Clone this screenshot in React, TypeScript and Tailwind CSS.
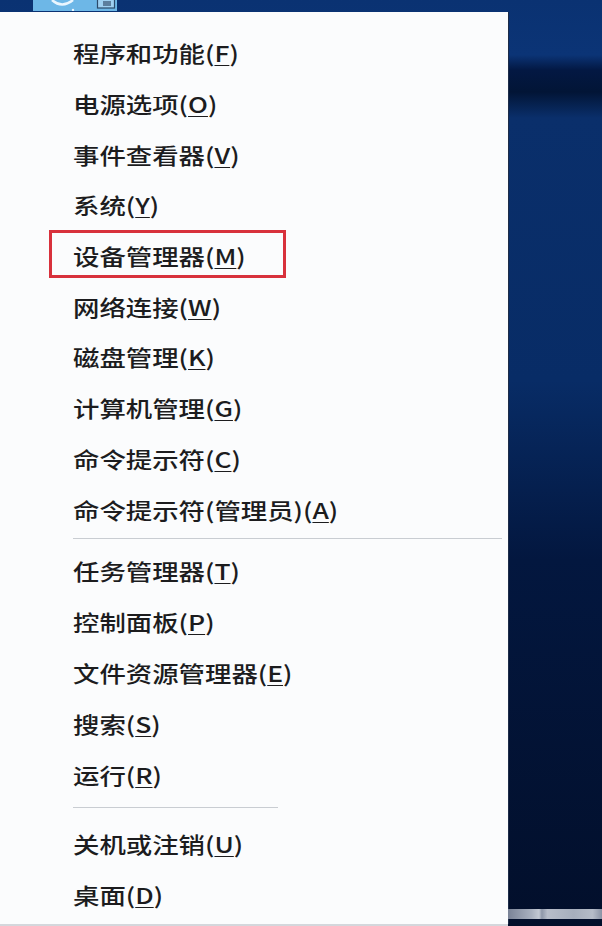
import React from "react";

type Item = { label: string; key: string; boxed?: boolean };

const groups: { items: Item[]; row: string }[] = [
  {
    row: "h-[50.7px]",
    items: [
      { label: "程序和功能", key: "F" },
      { label: "电源选项", key: "O" },
      { label: "事件查看器", key: "V" },
      { label: "系统", key: "Y" },
      { label: "设备管理器", key: "M", boxed: true },
      { label: "网络连接", key: "W" },
      { label: "磁盘管理", key: "K" },
      { label: "计算机管理", key: "G" },
      { label: "命令提示符", key: "C" },
      { label: "命令提示符(管理员)", key: "A" },
    ],
  },
  {
    row: "h-[51px]",
    items: [
      { label: "任务管理器", key: "T" },
      { label: "控制面板", key: "P" },
      { label: "文件资源管理器", key: "E" },
      { label: "搜索", key: "S" },
      { label: "运行", key: "R" },
    ],
  },
  {
    row: "h-[51px]",
    items: [
      { label: "关机或注销", key: "U" },
      { label: "桌面", key: "D" },
    ],
  },
];

function MenuRow({ item, row }: { item: Item; row: string }) {
  return (
    <div className={`relative flex items-center pl-[73px] ${row}`}>
      <span className="origin-left scale-x-[1.2] whitespace-nowrap text-[22px] font-medium leading-none text-[#1c1c1e]">
        {item.label}(<span className="underline decoration-1 underline-offset-[3px]">{item.key}</span>)
      </span>
      {item.boxed && (
        <div className="absolute left-[49px] top-0 h-[48px] w-[237px] border-[3px] border-[#d8313c]" />
      )}
    </div>
  );
}

function StartButton() {
  return (
    <div className="h-[11px] w-[84px] bg-[#6db7e7]">
      <svg width="84" height="11" viewBox="0 0 84 11">
        <path d="M19 0 Q29 9 40 0" fill="none" stroke="#eaf6ff" strokeWidth="2.5" />
        <circle cx="40" cy="10" r="1.2" fill="#eaf6ff" />
        <rect x="64.5" y="-2" width="17" height="10" fill="#9ed0f1" stroke="#2b4a6a" strokeWidth="1.2" />
        <rect x="70" y="1" width="8" height="5" fill="#5c7f9e" />
      </svg>
    </div>
  );
}

export default function App() {
  return (
    <div
      className="flex h-[926px] w-[602px] overflow-hidden bg-[linear-gradient(180deg,#0a3272_0px,#0b3476_55px,#031843_70px,#021536_92px,#0a2f6b_118px,#082c66_380px,#03173f_560px,#020f2b_926px)]"
      style={{ fontFamily: '"Noto Sans CJK SC", "Noto Sans", sans-serif' }}
    >
      <div className="flex w-[508px] flex-col">
        <div className="h-[12px] pl-[33px]">
          <StartButton />
        </div>
        <div className="flex h-[912px] flex-col bg-[#fbfcfd] pt-[15px] shadow-[1px_0_0_#1d2c48]">
          {groups[0].items.map((it) => (
            <MenuRow key={it.key} item={it} row={groups[0].row} />
          ))}
          <div className="h-[11px] pl-[73px] pr-[6px] pt-[4px]">
            <div className="h-px bg-[#c9cdd2]" />
          </div>
          {groups[1].items.map((it) => (
            <MenuRow key={it.key} item={it} row={groups[1].row} />
          ))}
          <div className="h-[17.5px] pt-[7px]">
            <div className="ml-[73px] h-px w-[205px] bg-[#c9cdd2]" />
          </div>
          {groups[2].items.map((it) => (
            <MenuRow key={it.key} item={it} row={groups[2].row} />
          ))}
        </div>
        <div className="h-[2px] bg-[#d4d7dc]" />
      </div>
      <div className="flex flex-1 flex-col justify-end pb-[7px]">
        <div className="h-[10px] bg-[linear-gradient(90deg,#7a8397,#a9b1bf_25%,#c3c9d3_33%,#8e97a9_36%,#b7bdc9_42%,#a6aebc_70%,#b5bcc8_90%,#8a93a5)]" />
      </div>
    </div>
  );
}
